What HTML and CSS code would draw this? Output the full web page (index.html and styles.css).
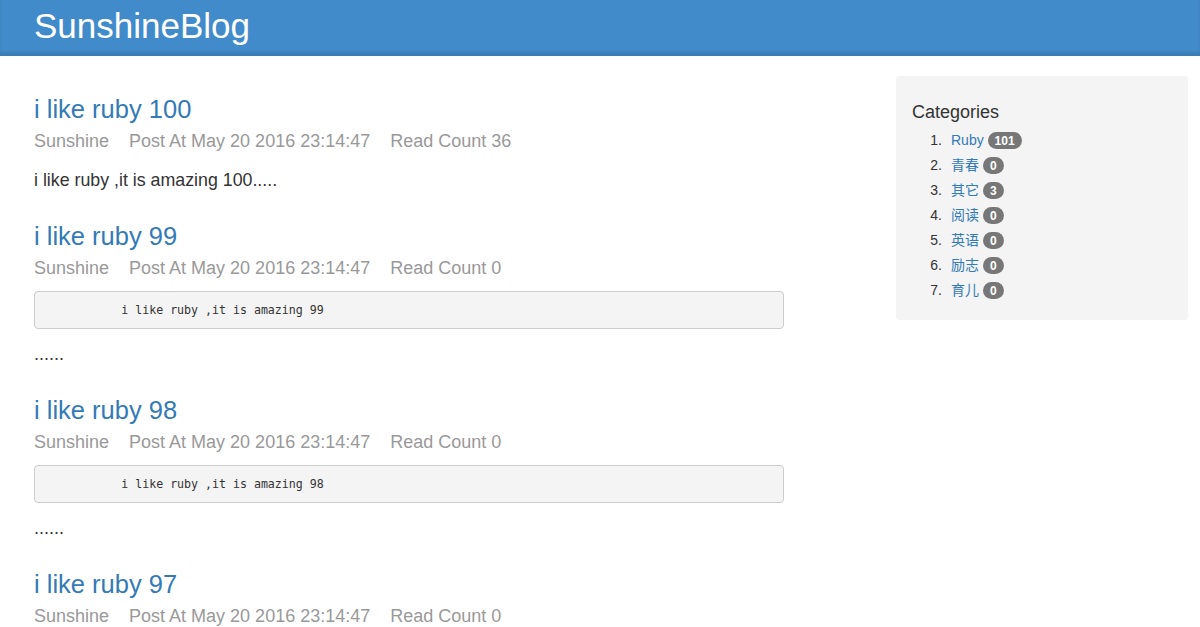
FILE: index.html
```html
<!DOCTYPE html>
<html lang="en">
<head>
<meta charset="utf-8">
<title>SunshineBlog</title>
<link rel="stylesheet" href="styles.css">
</head>
<body>
<header class="navbar">
  <a class="brand" href="#">SunshineBlog</a>
</header>
<div class="container">
  <main class="posts">
    <article class="post">
      <h3 class="post-title"><a href="#">i like ruby 100</a></h3>
      <div class="meta"><span>Sunshine</span><span>Post At May 20 2016 23:14:47</span><span>Read Count 36</span></div>
      <p class="excerpt">i like ruby ,it is amazing 100.....</p>
    </article>
    <article class="post">
      <h3 class="post-title"><a href="#">i like ruby 99</a></h3>
      <div class="meta"><span>Sunshine</span><span>Post At May 20 2016 23:14:47</span><span>Read Count 0</span></div>
      <pre class="code">           i like ruby ,it is amazing 99</pre>
      <p class="more">......</p>
    </article>
    <article class="post">
      <h3 class="post-title"><a href="#">i like ruby 98</a></h3>
      <div class="meta"><span>Sunshine</span><span>Post At May 20 2016 23:14:47</span><span>Read Count 0</span></div>
      <pre class="code">           i like ruby ,it is amazing 98</pre>
      <p class="more">......</p>
    </article>
    <article class="post">
      <h3 class="post-title"><a href="#">i like ruby 97</a></h3>
      <div class="meta"><span>Sunshine</span><span>Post At May 20 2016 23:14:47</span><span>Read Count 0</span></div>
      <pre class="code">           i like ruby ,it is amazing 97</pre>
      <p class="more">......</p>
    </article>
  </main>
  <aside class="sidebar">
    <h4 class="side-title">Categories</h4>
    <ol class="cats">
      <li><a href="#">Ruby</a> <span class="badge">101</span></li>
      <li><a href="#">青春</a> <span class="badge">0</span></li>
      <li><a href="#">其它</a> <span class="badge">3</span></li>
      <li><a href="#">阅读</a> <span class="badge">0</span></li>
      <li><a href="#">英语</a> <span class="badge">0</span></li>
      <li><a href="#">励志</a> <span class="badge">0</span></li>
      <li><a href="#">育儿</a> <span class="badge">0</span></li>
    </ol>
  </aside>
</div>
</body>
</html>
```
FILE: styles.css
```css
html, body {
  margin: 0;
  padding: 0;
}
body {
  font-family: "Liberation Sans", Arial, "Noto Sans CJK SC", sans-serif;
  color: #333;
  background: #fff;
  overflow: hidden;
}
a {
  color: #337ab7;
  text-decoration: none;
}
.navbar {
  height: 55px;
  background: #428bca;
  border-bottom: 1px solid #3a7cb6;
  box-shadow: inset 0 -3px 3px rgba(0, 0, 0, 0.1);
  padding-left: 34px;
}
.brand {
  display: block;
  font-size: 35px;
  line-height: 51px;
  color: #fff;
}
.container {
  display: flex;
  justify-content: space-between;
  align-items: flex-start;
  padding: 20px 12px 0 34px;
}
.posts {
  width: 750px;
  padding-top: 19px;
}
.post {
  margin-bottom: 30px;
}
.post-title {
  margin: 0 0 7px;
  font-size: 25.5px;
  line-height: 29px;
  font-weight: normal;
}
.meta {
  font-size: 18px;
  line-height: 20px;
  color: #999;
}
.meta span {
  margin-right: 20px;
}
.excerpt {
  margin: 17px 0 0;
  font-size: 17.8px;
  line-height: 24px;
}
.code {
  margin: 13px 0 13px;
  padding: 9.5px;
  font-family: "DejaVu Sans Mono", monospace;
  font-size: 11.6px;
  line-height: 17px;
  color: #333;
  background: #f4f4f4;
  border: 1px solid #ccc;
  border-radius: 4px;
}
.more {
  margin: 0;
  font-size: 18px;
  line-height: 24px;
}
.sidebar {
  width: 292px;
  box-sizing: border-box;
  padding: 26px 16px 17px;
  background: #f4f4f4;
  border-radius: 4px;
}
.side-title {
  margin: 0 0 6px;
  font-size: 18px;
  line-height: 20px;
  font-weight: normal;
  color: #333;
}
.cats {
  margin: 0;
  padding: 0;
  list-style: none;
  counter-reset: cat;
  font-size: 14px;
}
.cats li {
  height: 25px;
  line-height: 25px;
  counter-increment: cat;
}
.cats li::before {
  content: counter(cat) ".";
  display: inline-block;
  width: 30px;
  margin-right: 9px;
  text-align: right;
  color: #333;
}
.badge {
  display: inline-block;
  min-width: 6px;
  padding: 3px 7px 2px;
  font-size: 12px;
  font-weight: bold;
  line-height: 12px;
  color: #fff;
  text-align: center;
  vertical-align: middle;
  background: #777;
  border-radius: 10px;
  position: relative;
  top: -1px;
}
```
